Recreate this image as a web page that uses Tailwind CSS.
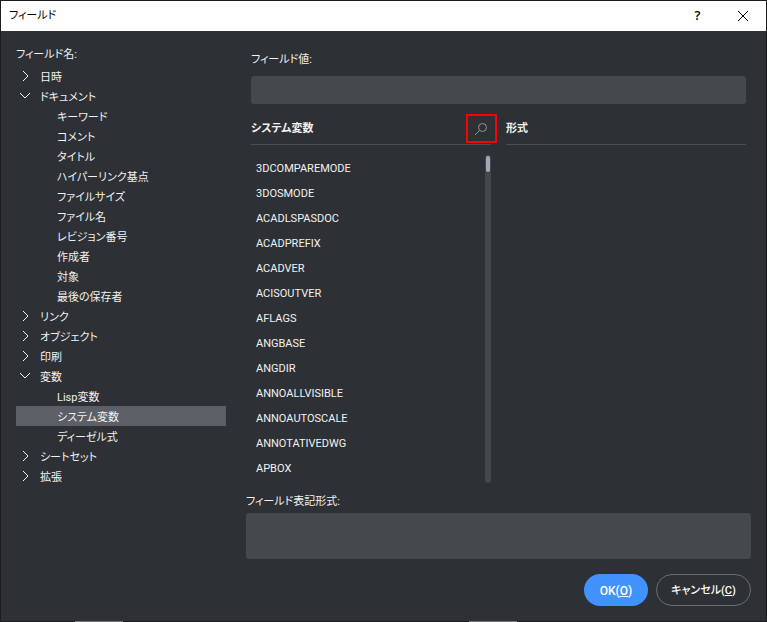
<!DOCTYPE html>
<html lang="ja">
<head>
<meta charset="utf-8">
<meta name="viewport" content="width=device-width, initial-scale=1">
<title>フィールド</title>
<script src="https://cdn.jsdelivr.net/npm/@tailwindcss/browser@4"></script>
</head>
<body class="bg-[#1d1b20]">
<svg class="hidden">
  <symbol id="right" viewBox="0 0 12 12"><path d="M4 1L9 6L4 11" fill="none" stroke="currentColor"/></symbol>
  <symbol id="down" viewBox="0 0 12 12"><path d="M1 3L6 8L11 3" fill="none" stroke="currentColor"/></symbol>
</svg>
<div class="relative flex min-h-screen flex-col border border-[#1d1b20] bg-[#2d3034] font-['Roboto','Noto_Sans_CJK_JP',sans-serif] text-[11px] text-[#f2f2f2] [font-feature-settings:'palt']">
  <header class="flex h-[30px] items-center bg-white pl-2 text-black">
    <h1 class="flex-1 text-[11px] leading-4">フィールド</h1>
    <button type="button" aria-label="ヘルプ" class="flex h-full w-[45px] items-center justify-center font-['Open_Sans'] text-[13px] font-semibold">?</button>
    <button type="button" aria-label="閉じる" class="flex h-full w-[46px] items-center justify-center">
      <svg class="size-3" viewBox="0 0 12 12"><path d="M1 1L11 11M11 1L1 11" fill="none" stroke="#000"/></svg>
    </button>
  </header>

  <main class="flex flex-1 pr-[15px] pb-[15px] pl-[15px]">
    <nav class="w-[210px] shrink-0 pt-[15px]" aria-labelledby="tree-label">
      <h2 id="tree-label" class="h-5 leading-[18px]">フィールド名:</h2>
      <ul class="leading-6">
        <li><button type="button" class="flex h-5 w-full items-start gap-[9px] pl-[3px]"><svg class="mt-1 size-3"><use href="#right"/></svg>日時</button></li>
        <li><button type="button" class="flex h-5 w-full items-start gap-[9px] pl-[3px]"><svg class="mt-1 size-3"><use href="#down"/></svg>ドキュメント</button>
          <ul>
            <li><button type="button" class="flex h-5 w-full items-start pl-[41px]">キーワード</button></li>
            <li><button type="button" class="flex h-5 w-full items-start pl-[41px]">コメント</button></li>
            <li><button type="button" class="flex h-5 w-full items-start pl-[41px]">タイトル</button></li>
            <li><button type="button" class="flex h-5 w-full items-start pl-[41px]">ハイパーリンク基点</button></li>
            <li><button type="button" class="flex h-5 w-full items-start pl-[41px]">ファイルサイズ</button></li>
            <li><button type="button" class="flex h-5 w-full items-start pl-[41px]">ファイル名</button></li>
            <li><button type="button" class="flex h-5 w-full items-start pl-[41px]">レビジョン番号</button></li>
            <li><button type="button" class="flex h-5 w-full items-start pl-[41px]">作成者</button></li>
            <li><button type="button" class="flex h-5 w-full items-start pl-[41px]">対象</button></li>
            <li><button type="button" class="flex h-5 w-full items-start pl-[41px]">最後の保存者</button></li>
          </ul>
        </li>
        <li><button type="button" class="flex h-5 w-full items-start gap-[9px] pl-[3px]"><svg class="mt-1 size-3"><use href="#right"/></svg>リンク</button></li>
        <li><button type="button" class="flex h-5 w-full items-start gap-[9px] pl-[3px]"><svg class="mt-1 size-3"><use href="#right"/></svg>オブジェクト</button></li>
        <li><button type="button" class="flex h-5 w-full items-start gap-[9px] pl-[3px]"><svg class="mt-1 size-3"><use href="#right"/></svg>印刷</button></li>
        <li><button type="button" class="flex h-5 w-full items-start gap-[9px] pl-[3px]"><svg class="mt-1 size-3"><use href="#down"/></svg>変数</button>
          <ul>
            <li><button type="button" class="flex h-5 w-full items-start pl-[41px]">Lisp変数</button></li>
            <li><button type="button" aria-current="true" class="flex h-5 w-full items-start bg-[#5c6066] pl-[41px]">システム変数</button></li>
            <li><button type="button" class="flex h-5 w-full items-start pl-[41px]">ディーゼル式</button></li>
          </ul>
        </li>
        <li><button type="button" class="flex h-5 w-full items-start gap-[9px] pl-[3px]"><svg class="mt-1 size-3"><use href="#right"/></svg>シートセット</button></li>
        <li><button type="button" class="flex h-5 w-full items-start gap-[9px] pl-[3px]"><svg class="mt-1 size-3"><use href="#right"/></svg>拡張</button></li>
      </ul>
    </nav>

    <form class="ml-5 flex min-w-0 flex-1 flex-col pt-5">
      <div class="flex flex-1 flex-col px-[5px]">
        <label for="value" class="h-[25px] leading-[18px]">フィールド値:</label>
        <input id="value" type="text" readonly class="h-7 w-full rounded-[3px] bg-[#45484c] px-2 outline-none">
        <div class="mt-2 grid flex-1 grid-cols-2 gap-[15px]">
          <section class="flex flex-col">
            <div class="relative flex h-[33px] items-center border-b border-[#4a4d51] pt-0.5">
              <h2 class="font-bold leading-4">システム変数</h2>
              <button type="button" aria-label="検索" class="absolute top-[2px] -right-[6px] flex h-[29px] w-[31px] items-center justify-center border-2 border-[#fb0007] pr-0.5">
                <svg class="h-[14px] w-[14px]" viewBox="0 0 14 14" fill="none" stroke="#929498"><circle cx="8.5" cy="5.5" r="4"/><path d="M5.6 8.4L1 13"/></svg>
              </button>
            </div>
            <div class="mt-[10px] flex flex-1">
              <ul class="flex-1 pt-px pl-[5px] leading-[25px]">
                <li>3DCOMPAREMODE</li>
                <li>3DOSMODE</li>
                <li>ACADLSPASDOC</li>
                <li>ACADPREFIX</li>
                <li>ACADVER</li>
                <li>ACISOUTVER</li>
                <li>AFLAGS</li>
                <li>ANGBASE</li>
                <li>ANGDIR</li>
                <li>ANNOALLVISIBLE</li>
                <li>ANNOAUTOSCALE</li>
                <li>ANNOTATIVEDWG</li>
                <li>APBOX</li>
              </ul>
              <div class="w-[6px] rounded-full bg-[#45484c] px-px pt-px"><div class="h-4 rounded-full bg-[#a3a9b8]"></div></div>
            </div>
          </section>
          <section>
            <h2 class="flex h-[33px] items-center border-b border-[#4a4d51] pt-0.5 font-bold">形式</h2>
          </section>
        </div>
      </div>
      <label for="expression" class="mt-[10px] h-5 leading-[18px]">フィールド表記形式:</label>
      <textarea id="expression" readonly class="h-[46px] w-full resize-none rounded-[3px] bg-[#45484c] p-2 outline-none"></textarea>
      <div class="mt-[15px] flex justify-end gap-2">
        <button type="button" class="h-8 w-16 rounded-full bg-[#4192ff] pt-0.5 text-[12px] font-medium text-white">OK(<u>O</u>)</button>
        <button type="button" class="h-8 w-[95px] rounded-full border border-[#6a6d72] pt-0.5 text-[11px] font-medium text-white">キャンセル(<u>C</u>)</button>
      </div>
    </form>
  </main>
  <span class="absolute -bottom-px left-[74px] h-px w-12 bg-[#77757a]"></span>
  <span class="absolute -bottom-px left-[468px] h-px w-12 bg-[#77757a]"></span>
</div>
</body>
</html>
